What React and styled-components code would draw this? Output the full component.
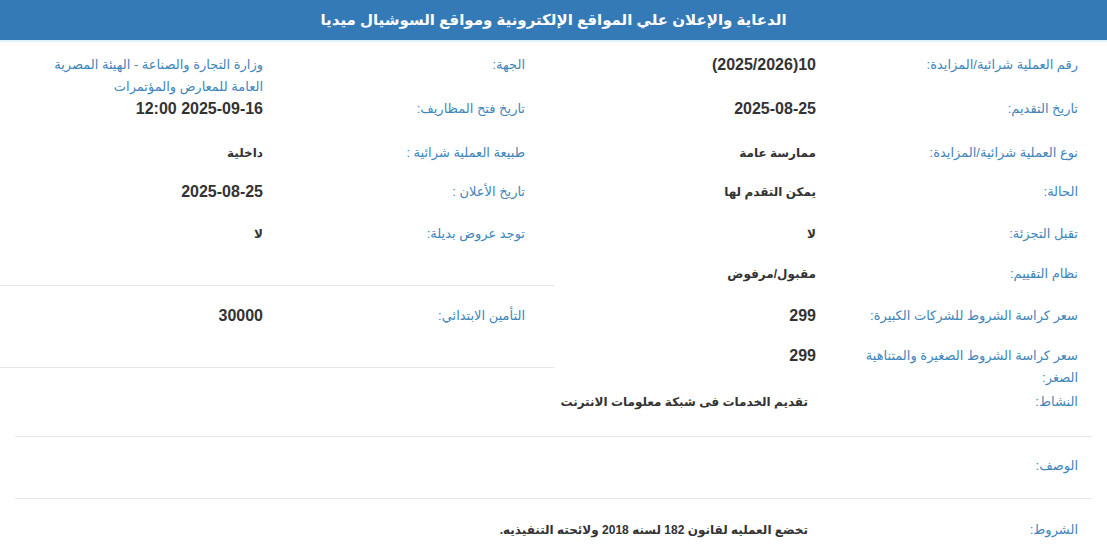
import React from 'react'
import styled, { createGlobalStyle } from 'styled-components'

const GlobalStyle = createGlobalStyle`
  body {
    margin: 0;
    background: #fff;
    font-family: "Liberation Sans", "DejaVu Sans", sans-serif;
  }
`

const Page = styled.div`
  direction: rtl;
  width: 1107px;
`

const Title = styled.h1`
  margin: 0;
  height: 40px;
  background: #337ab7;
  border-bottom: 2px solid #dff2f8;
  color: #fff;
  font-size: 15px;
  font-weight: bold;
  display: flex;
  align-items: center;
  justify-content: center;
`

const Columns = styled.div`
  display: grid;
  grid-template-columns: 553px 554px;
  padding-top: 12px;
  align-items: start;
`

const Column = styled.div`
  display: flex;
  flex-direction: column;
`

const Block = styled.div`
  padding-top: ${p => p.pt || 0}px;
  padding-bottom: ${p => p.pb || 0}px;
  border-bottom: 1px solid #e6e6e6;
`

const Row = styled.div`
  display: grid;
  grid-template-columns: ${p => p.labelW || 262}px 1fr;
  min-height: ${p => p.h || 42}px;
  padding-right: 29px;
  align-items: start;
  line-height: 22px;
`

const Label = styled.div`
  color: #3f86ba;
  font-size: 13px;
  padding-left: 40px;
`

const Value = styled.div`
  color: ${p => (p.blue ? '#3f86ba' : '#333')};
  font-weight: ${p => (p.blue ? 'normal' : 'bold')};
  font-size: ${p => (p.num ? 16 : p.blue ? 13 : 12)}px;
  padding-left: ${p => (p.blue ? 30 : 0)}px;
  white-space: ${p => (p.nowrap ? 'nowrap' : 'normal')};
`

const Section = styled.div`
  margin: 0 15px;
  border-top: 1px solid #e6e6e6;
  padding: ${p => p.pt}px 14px ${p => p.pb}px 0;
  margin-top: ${p => p.mt || 0}px;
  display: grid;
  grid-template-columns: 270px 1fr;
  line-height: 22px;
`

const rightRows = [
  { label: 'رقم العملية شرائية/المزايدة:', value: '10(2025/2026)', num: true, h: 44 },
  { label: 'تاريخ التقديم:', value: '2025-08-25', num: true, h: 44 },
  { label: 'نوع العملية شرائية/المزايدة:', value: 'ممارسة عامة', h: 39 },
  { label: 'الحالة:', value: 'يمكن التقدم لها', h: 42 },
  { label: 'تقبل التجزئة:', value: 'لا', h: 40 },
  { label: 'نظام التقييم:', value: 'مقبول/مرفوض', h: 42 },
  { label: 'سعر كراسة الشروط للشركات الكبيرة:', value: '299', num: true, h: 40 },
  { label: 'سعر كراسة الشروط الصغيرة والمتناهية الصغر:', value: '299', num: true, h: 46 },
  { label: 'النشاط:', value: 'تقديم الخدمات فى شبكة معلومات الانترنت', h: 22, labelW: 270, nowrap: true },
]

const leftRows = [
  { label: 'الجهة:', value: 'وزارة التجارة والصناعة - الهيئة المصرية العامة للمعارض والمؤتمرات', blue: true, h: 44 },
  { label: 'تاريخ فتح المظاريف:', value: '2025-09-16 12:00', num: true, h: 44 },
  { label: 'طبيعة العملية شرائية :', value: 'داخلية', h: 39 },
  { label: 'تاريخ الأعلان :', value: '2025-08-25', num: true, h: 42 },
  { label: 'توجد عروض بديلة:', value: 'لا', h: 62 },
]

const renderRow = r => (
  <Row key={r.label} h={r.h} labelW={r.labelW}>
    <Label>{r.label}</Label>
    <Value num={r.num} blue={r.blue} nowrap={r.nowrap}>{r.value}</Value>
  </Row>
)

const App = () => (
  <Page>
    <GlobalStyle />
    <Title>الدعاية والإعلان علي المواقع الإلكترونية ومواقع السوشيال ميديا</Title>
    <Columns>
      <Column>{rightRows.map(renderRow)}</Column>
      <Column>
        <Block>{leftRows.map(renderRow)}</Block>
        <Block pt={19} pb={20}>
          {renderRow({ label: 'التأمين الابتدائي:', value: '30000', num: true, h: 42 })}
        </Block>
      </Column>
    </Columns>
    <Section mt={23} pt={18} pb={21}>
      <Label>الوصف:</Label>
      <Value />
    </Section>
    <Section pt={20} pb={20}>
      <Label>الشروط:</Label>
      <Value>تخضع العمليه لقانون 182 لسنه 2018 ولائحته التنفيذيه.</Value>
    </Section>
  </Page>
)

export default App
